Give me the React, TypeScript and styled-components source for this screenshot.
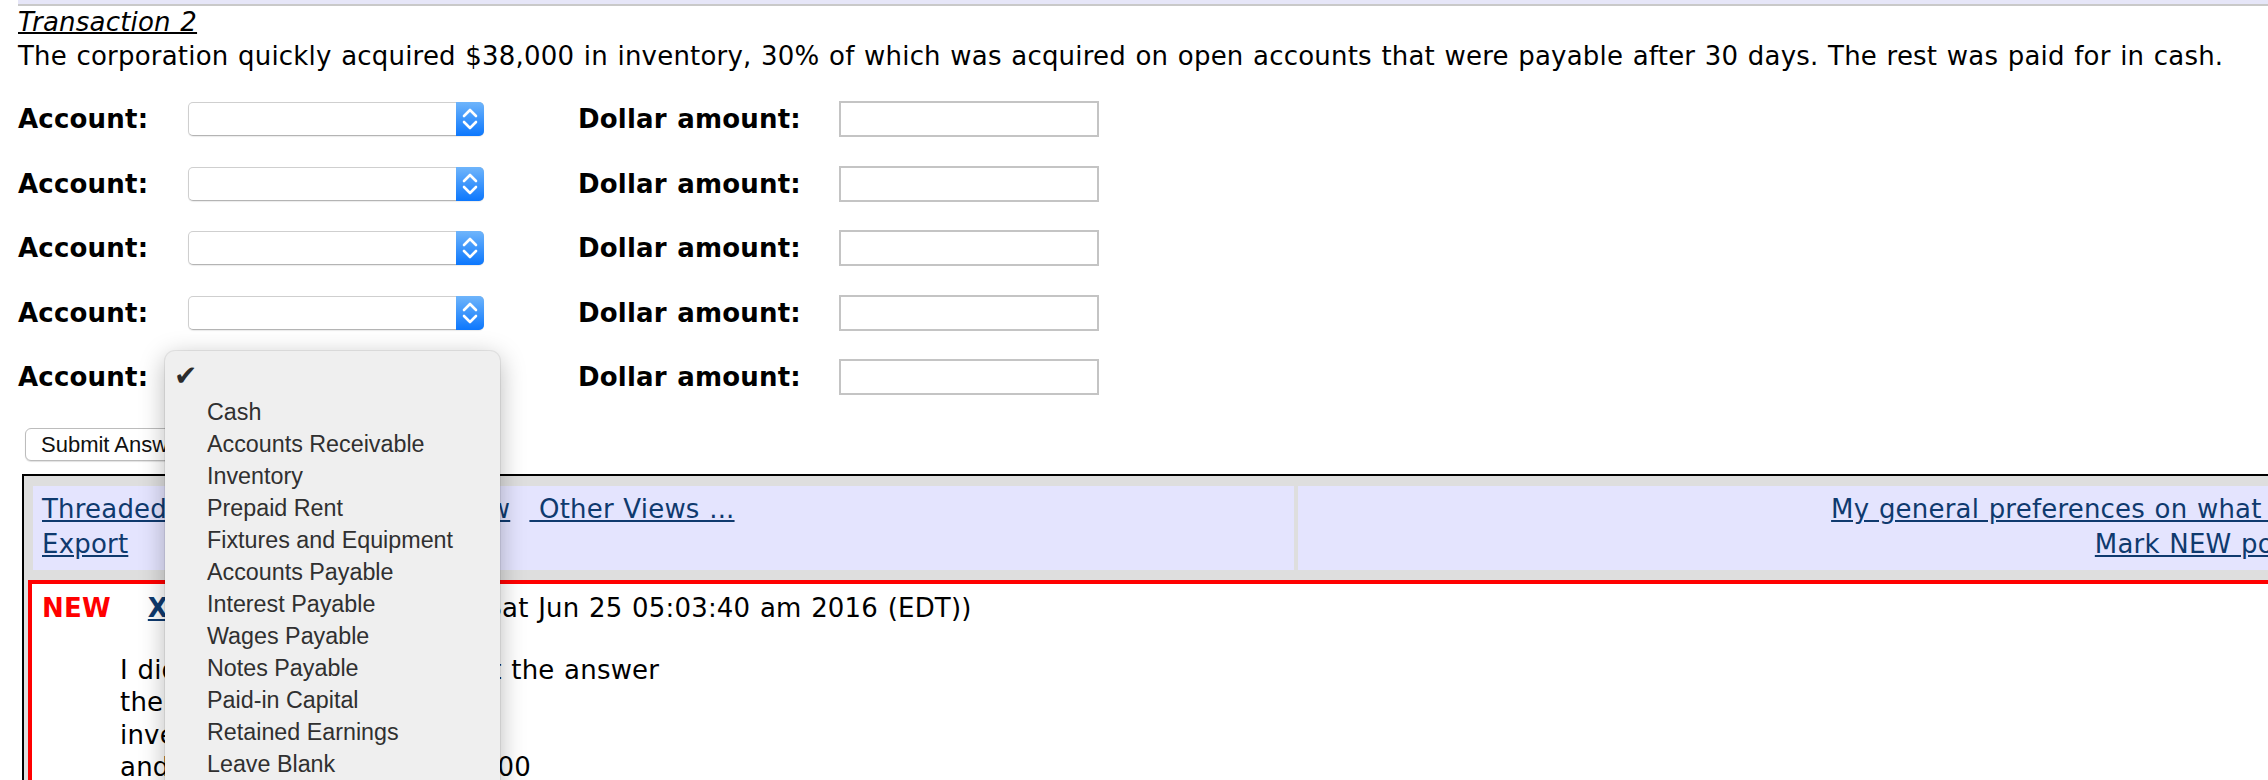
import styled, { createGlobalStyle } from 'styled-components';

const GlobalStyle = createGlobalStyle`
  html, body {
    margin: 0;
    padding: 0;
    background: #fff;
    overflow: hidden;
  }
  body {
    font-family: 'DejaVu Sans', Verdana, sans-serif;
    font-size: 26px;
    color: #000;
    letter-spacing: 0.2px;
    word-spacing: 1.1px;
  }
`;

const Page = styled.div`
  width: 2268px;
  height: 780px;
  overflow: hidden;
`;

const TopBar = styled.div`
  margin-left: 18px;
  height: 4px;
  background: #e6e6f8;
  border-bottom: 2px solid #c9c9c9;
`;

const Content = styled.div`
  padding-left: 18px;
`;

const Heading = styled.div`
  font-style: italic;
  text-decoration: underline;
  text-decoration-thickness: 2px;
  line-height: 32px;
`;

const Question = styled.p`
  margin: 2px 0 0;
  line-height: 32px;
`;

const Form = styled.div`
  margin-top: 29px;
  display: flex;
  flex-direction: column;
  gap: 28.5px;
`;

const Row = styled.div`
  display: grid;
  grid-template-columns: 170px 296px 94px 261px 260px;
  align-items: center;
  height: 36px;
`;

const Label = styled.span`
  font-weight: bold;
`;

const SelectBox = styled.div`
  position: relative;
  display: flex;
  height: 34px;
  box-sizing: border-box;
  border: 1px solid #cfcfcf;
  border-bottom-color: #b4b4b4;
  border-radius: 5px;
  background: #fff;
  box-shadow: 0 1px 1px rgba(0, 0, 0, 0.08);
`;

const SelectValue = styled.div`
  flex: 1;
`;

const SelectArrow = styled.div`
  width: 28px;
  margin: -1px -1px -1px 0;
  border-radius: 0 5px 5px 0;
  background: linear-gradient(#6fb5fb, #0c77fd);
  display: flex;
  align-items: center;
  justify-content: center;
`;

const AmountInput = styled.div`
  width: 260px;
  height: 36px;
  box-sizing: border-box;
  border: 2px solid #c4c4c4;
  background: #fff;
`;

const Menu = styled.div`
  position: absolute;
  left: -24px;
  top: -10px;
  width: 335px;
  padding-top: 13px;
  height: 460px;
  box-sizing: border-box;
  background: #efefef;
  border-radius: 10px;
  box-shadow: 0 6px 26px rgba(0, 0, 0, 0.28), 0 0 0 1px rgba(0, 0, 0, 0.07);
  font-family: 'Liberation Sans', Arial, sans-serif;
  font-size: 23.3px;
  color: #303030;
  letter-spacing: normal;
  word-spacing: normal;
  z-index: 10;
`;

const MenuItem = styled.div`
  position: relative;
  height: 32px;
  line-height: 32px;
  padding-left: 42px;
  white-space: nowrap;
`;

const Check = styled.span`
  position: absolute;
  left: 9px;
  top: -4px;
  font-family: 'DejaVu Sans', sans-serif;
  font-size: 28px;
  color: #2b2b2b;
`;

const SubmitButton = styled.button`
  margin: 33px 0 0 7px;
  height: 33px;
  padding: 0 15px;
  border: 1px solid #bcbcbc;
  border-radius: 6px;
  background: #fff;
  box-shadow: 0 1px 1px rgba(0, 0, 0, 0.12);
  font-family: 'Liberation Sans', Arial, sans-serif;
  font-size: 22px;
  color: #111;
  letter-spacing: normal;
  word-spacing: normal;
`;

const Frame = styled.div`
  margin: 13px 0 0 4px;
  width: 2395px;
  height: 400px;
  border: 2px solid #000;
  background: #dedede;
`;

const NavRow = styled.div`
  display: grid;
  grid-template-columns: 1261px 1fr;
  gap: 4px;
  margin: 10px 9px 0;
`;

const NavCell = styled.div<{ $align?: 'left' | 'right' }>`
  background: #e4e4fe;
  padding: 6px 9px 8px;
  line-height: 35px;
  text-align: ${(p) => p.$align ?? 'left'};
  white-space: nowrap;
`;

const Link = styled.a<{ $bold?: boolean }>`
  color: #0f3a6e;
  text-decoration: underline;
  font-weight: ${(p) => (p.$bold ? 'bold' : 'normal')};
  cursor: pointer;
`;

const Message = styled.div`
  margin: 10px 4px 0 4px;
  height: 300px;
  border: 4px solid #ff0000;
  background: #fff;
  padding: 8px 10px;
  line-height: 32.5px;
`;

const NewTag = styled.span`
  display: inline-block;
  margin-right: 37px;
  color: #ff0000;
  font-weight: bold;
`;

const Body = styled.div`
  margin: 29px 0 0 78px;
  line-height: 32.5px;
`;

const accounts = [
  'Cash',
  'Accounts Receivable',
  'Inventory',
  'Prepaid Rent',
  'Fixtures and Equipment',
  'Accounts Payable',
  'Interest Payable',
  'Wages Payable',
  'Notes Payable',
  'Paid-in Capital',
  'Retained Earnings',
  'Leave Blank',
];

const Chevrons = () => (
  <svg width="28" height="34" viewBox="0 0 28 34" fill="none">
    <polyline points="8,14 14,8 20,14" stroke="#fff" strokeWidth="2.6" strokeLinecap="round" strokeLinejoin="round" />
    <polyline points="8,20 14,26 20,20" stroke="#fff" strokeWidth="2.6" strokeLinecap="round" strokeLinejoin="round" />
  </svg>
);

const AccountSelect = ({ open }: { open?: boolean }) => (
  <SelectBox>
    <SelectValue />
    <SelectArrow>
      <Chevrons />
    </SelectArrow>
    {open && (
      <Menu>
        <MenuItem>
          <Check>✔</Check>
        </MenuItem>
        {accounts.map((a) => (
          <MenuItem key={a}>{a}</MenuItem>
        ))}
      </Menu>
    )}
  </SelectBox>
);

const App = () => {
  const rows = [0, 1, 2, 3, 4];
  return (
    <Page>
      <GlobalStyle />
      <TopBar />
      <Content>
        <Heading>Transaction 2</Heading>
        <Question>
          The corporation quickly acquired $38,000 in inventory, 30% of which was acquired on open
          accounts that were payable after 30 days. The rest was paid for in cash.
        </Question>
        <Form>
          {rows.map((r) => (
            <Row key={r}>
              <Label>Account:</Label>
              <AccountSelect open={r === 4} />
              <span />
              <Label>Dollar amount:</Label>
              <AmountInput />
            </Row>
          ))}
        </Form>
        <SubmitButton>Submit Answer</SubmitButton>
        <Frame>
          <NavRow>
            <NavCell>
              <Link>Threaded View</Link>&nbsp; <Link>Chronological View</Link>&nbsp;{' '}
              <Link>&nbsp;Other Views ...</Link>
              <br />
              <Link>Export</Link>
            </NavCell>
            <NavCell $align="right">
              <Link>My general preferences on what to display</Link>
              <br />
              <Link>Mark NEW posts as old</Link>
            </NavCell>
          </NavRow>
          <Message>
            <NewTag>NEW</NewTag>
            <Link $bold>Xavier Romero</Link> (Posted Sat Jun 25 05:03:40 am 2016 (EDT))
            <Body>
              I did $38,000 x 30% and got the answer
              <br />
              then subtracted it from
              <br />
              inventory to get 26,600
              <br />
              and account payable is 11,400
            </Body>
          </Message>
        </Frame>
      </Content>
    </Page>
  );
};

export default App;
